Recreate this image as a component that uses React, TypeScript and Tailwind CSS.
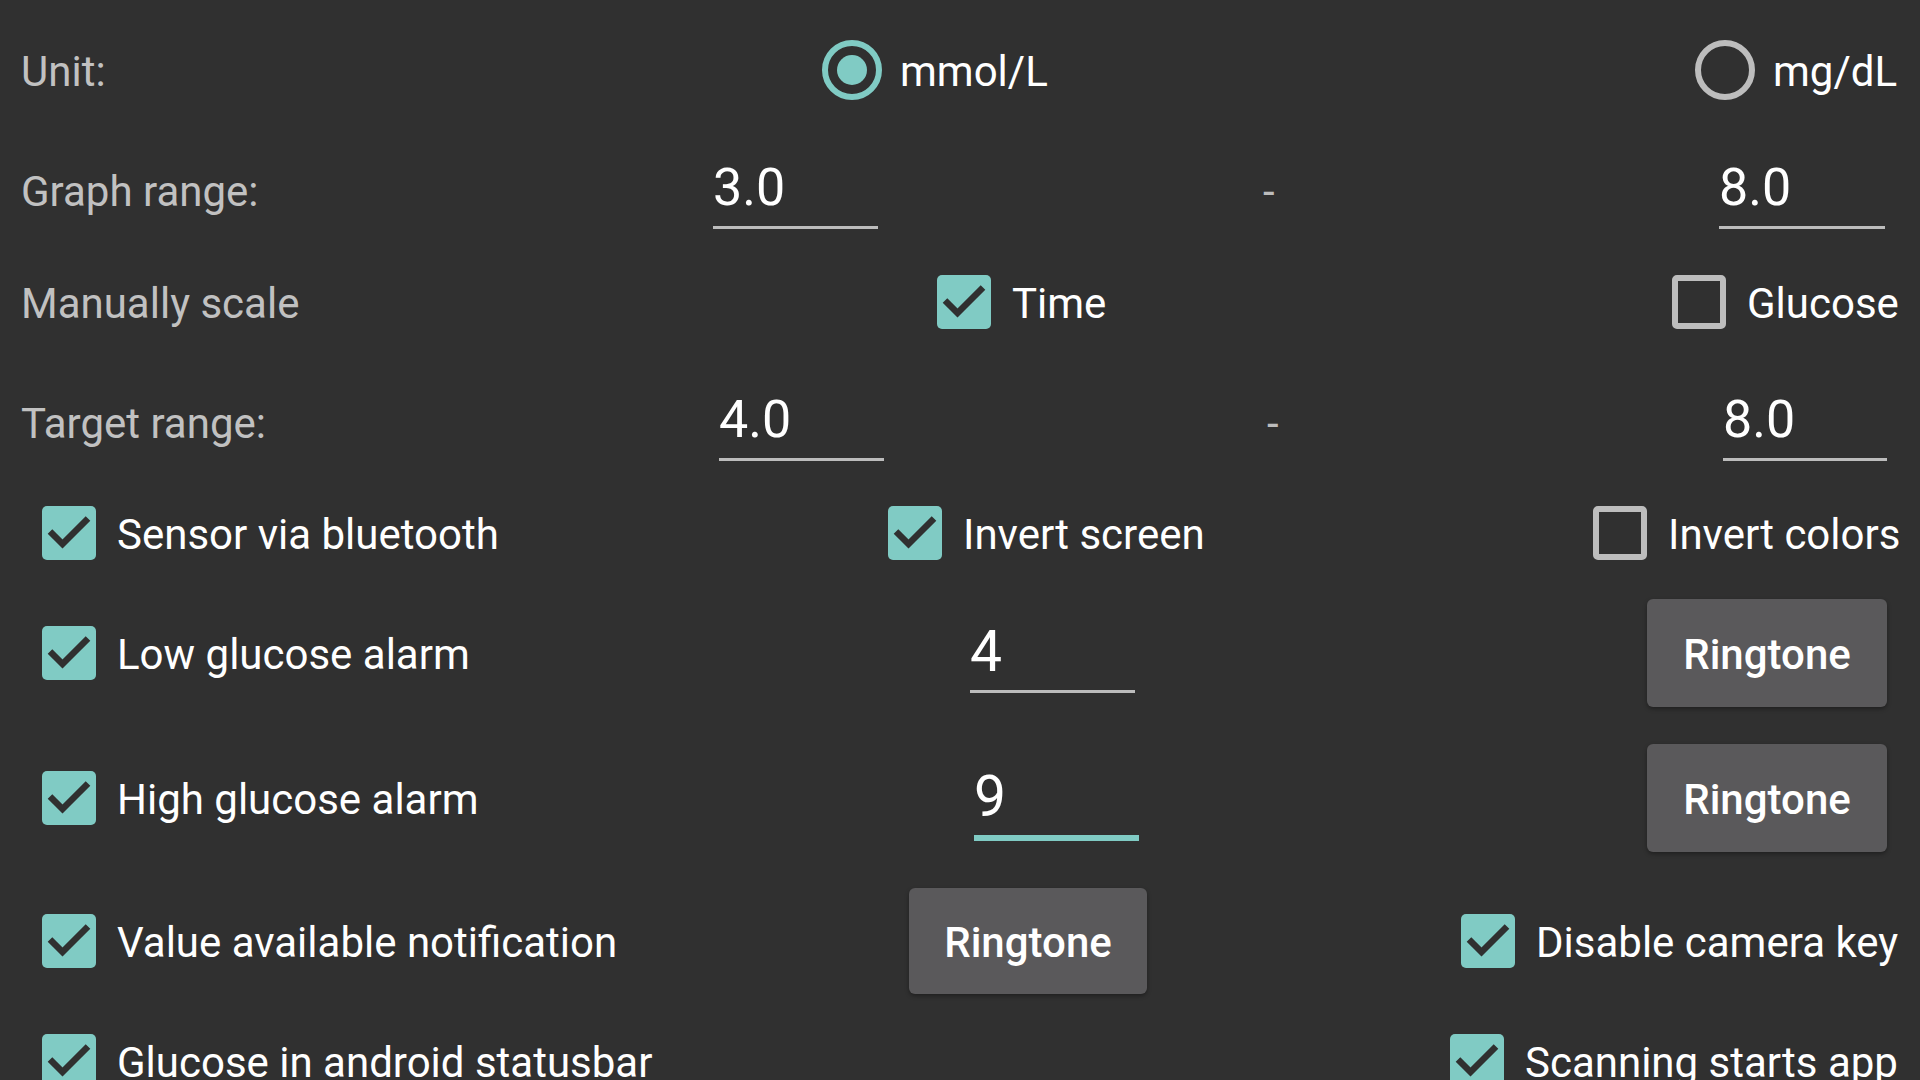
import type { ReactNode } from 'react';

function Check({ on }: { on: boolean }) {
  if (!on) {
    return <span className="h-[54px] w-[54px] shrink-0 rounded-[5px] border-[6px] border-[#bdbdbd]" />;
  }
  return (
    <span className="flex h-[54px] w-[54px] shrink-0 items-center justify-center rounded-[5px] bg-[#80cbc4]">
      <svg viewBox="0 0 54 54" className="h-[54px] w-[54px]">
        <path d="M8 25.5 L20.5 38 L46 12.5" fill="none" stroke="#303030" strokeWidth="6.5" />
      </svg>
    </span>
  );
}

function Radio({ on }: { on: boolean }) {
  return (
    <span
      className={`flex h-[60px] w-[60px] shrink-0 items-center justify-center rounded-full border-[6px] ${
        on ? 'border-[#80cbc4]' : 'border-[#bdbdbd]'
      }`}
    >
      {on ? <span className="h-[30px] w-[30px] rounded-full bg-[#80cbc4]" /> : null}
    </span>
  );
}

function Field({ value, className }: { value: string; className: string }) {
  return <div className={`shrink-0 leading-none text-white ${className}`}>{value}</div>;
}

function RingtoneButton({ className }: { className: string }) {
  return (
    <button
      type="button"
      className={`flex shrink-0 items-center justify-center rounded-[6px] bg-[#5a595b] pt-[4px] text-[42px] font-medium text-white shadow-[0_2px_4px_rgba(0,0,0,0.35)] ${className}`}
    >
      Ringtone
    </button>
  );
}

function Option({ box, label, className }: { box: ReactNode; label: string; className?: string }) {
  return (
    <div className={`flex shrink-0 items-center gap-[21px] ${className ?? ''}`}>
      {box}
      <span className="whitespace-nowrap pt-[4px] text-white">{label}</span>
    </div>
  );
}

function Row({ className, children }: { className: string; children: ReactNode }) {
  return <div className={`flex shrink-0 items-center ${className}`}>{children}</div>;
}

export default function App() {
  return (
    <div className="h-[1080px] w-[1920px] overflow-hidden bg-[#303030] pt-[10px] font-['Roboto',sans-serif] text-[42px] leading-none">
      <Row className="h-[120px]">
        <span className="ml-[21px] w-[801px] shrink-0 pt-[4px] text-[#c1c1c1]">Unit:</span>
        <Radio on />
        <span className="ml-[18px] w-[795px] shrink-0 pt-[4px] text-white">mmol/L</span>
        <Radio on={false} />
        <span className="ml-[18px] pt-[4px] text-white">mg/dL</span>
      </Row>

      <Row className="h-[120px]">
        <span className="ml-[21px] w-[692px] shrink-0 pt-[4px] text-[#c1c1c1]">Graph range:</span>
        <Field value="3.0" className="mt-[9px] w-[165px] border-b-[3px] border-[#bcbcbc] pt-[2px] pb-[12px] text-[52px]" />
        <span className="ml-[385px] w-[456px] shrink-0 pt-[4px] text-[#bcbcbc]">-</span>
        <Field value="8.0" className="mt-[9px] w-[166px] border-b-[3px] border-[#bcbcbc] pt-[2px] pb-[12px] text-[52px]" />
      </Row>

      <Row className="h-[104px]">
        <span className="ml-[21px] w-[916px] shrink-0 pt-[4px] text-[#c1c1c1]">Manually scale</span>
        <Option box={<Check on />} label="Time" className="w-[735px] gap-[19px]" />
        <Option box={<Check on={false} />} label="Glucose" className="gap-[20px]" />
      </Row>

      <Row className="h-[136px]">
        <span className="ml-[21px] w-[698px] shrink-0 pt-[4px] text-[#c1c1c1]">Target range:</span>
        <Field value="4.0" className="mt-[9px] w-[165px] border-b-[3px] border-[#bcbcbc] pt-[2px] pb-[12px] text-[52px]" />
        <span className="ml-[383px] w-[456px] shrink-0 pt-[4px] text-[#bcbcbc]">-</span>
        <Field value="8.0" className="mt-[9px] w-[164px] border-b-[3px] border-[#bcbcbc] pt-[2px] pb-[12px] text-[52px]" />
      </Row>

      <Row className="h-[86px]">
        <Option box={<Check on />} label="Sensor via bluetooth" className="ml-[42px] w-[846px]" />
        <Option box={<Check on />} label="Invert screen" className="w-[705px]" />
        <Option box={<Check on={false} />} label="Invert colors" />
      </Row>

      <Row className="h-[154px]">
        <Option box={<Check on />} label="Low glucose alarm" className="ml-[42px] w-[928px]" />
        <Field value="4" className="mt-[8px] w-[165px] border-b-[3px] border-[#bcbcbc] pt-[2px] pb-[10px] text-[57px]" />
        <span className="w-[512px] shrink-0" />
        <RingtoneButton className="h-[108px] w-[240px]" />
      </Row>

      <Row className="h-[136px]">
        <Option box={<Check on />} label="High glucose alarm" className="ml-[42px] w-[932px]" />
        <Field value="9" className="mt-[10px] w-[165px] border-b-[6px] border-[#80cbc4] pt-[2px] pb-[10px] text-[57px]" />
        <span className="w-[508px] shrink-0" />
        <RingtoneButton className="h-[108px] w-[240px]" />
      </Row>

      <Row className="h-[150px]">
        <Option box={<Check on />} label="Value available notification" className="ml-[42px] w-[867px]" />
        <RingtoneButton className="h-[106px] w-[238px]" />
        <span className="w-[314px] shrink-0" />
        <Option box={<Check on />} label="Disable camera key" />
      </Row>

      <Row className="h-[90px]">
        <Option box={<Check on />} label="Glucose in android statusbar" className="ml-[42px] w-[1408px]" />
        <Option box={<Check on />} label="Scanning starts app" />
      </Row>
    </div>
  );
}
